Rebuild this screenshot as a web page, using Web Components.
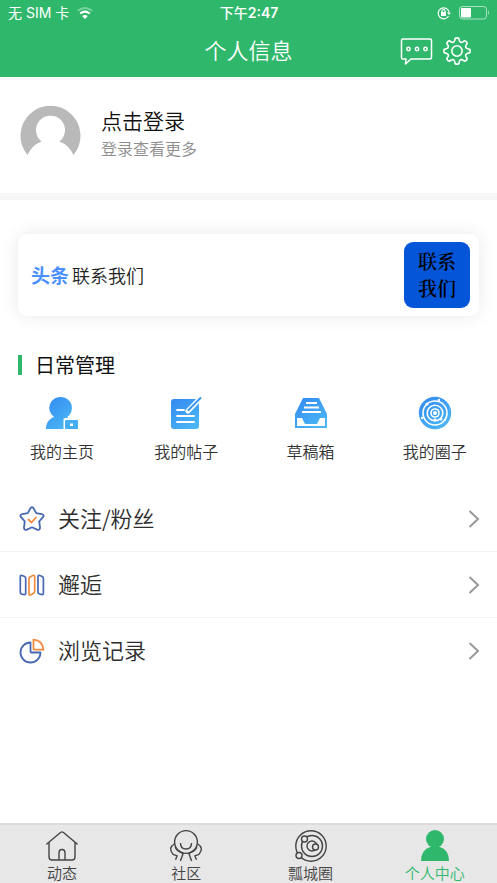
<!DOCTYPE html>
<html lang="zh-CN">
<head>
<meta charset="utf-8">
<meta name="viewport" content="width=device-width, initial-scale=1">
<title>个人信息</title>
<style>
  body { margin: 0; background: #fff; color: #2d2d2d; font-family: "Noto Sans CJK SC", sans-serif; }
</style>
</head>
<body>
<profile-page>
  <status-bar slot="top" carrier="无 SIM 卡" time="2:47" period="下午"></status-bar>
  <nav-bar slot="top">个人信息</nav-bar>

  <user-summary>点击登录<span slot="hint">登录查看更多</span></user-summary>
  <promo-card tag="头条">联系我们<span slot="badge">联系<br>我们</span></promo-card>

  <section-panel>
    <span slot="title">日常管理</span>
    <shortcut-item>
      <svg slot="icon" width="34" height="34" viewBox="0 0 34 34">
        <defs><linearGradient id="blue" x1="0" y1="0" x2="0.7" y2="1"><stop offset="0" stop-color="#3288f0"/><stop offset="1" stop-color="#4ab6f5"/></linearGradient></defs>
        <path fill="url(#blue)" d="M16 1a11 11 0 0 1 6 20.200l1.500.8H20a1.500 1.500 0 0 0-1.500 1.500V33H1c0-6 3-10 8-12A11 11 0 0 1 16 1z"/>
        <path fill="#46aff4" fill-rule="evenodd" d="M21 24h11q1 0 1 1v8H21q-1 0-1-1v-7q0-1 1-1zm4 3.500v2.500h3v-2.500z"/>
      </svg>我的主页</shortcut-item>
    <shortcut-item>
      <svg slot="icon" width="34" height="34" viewBox="0 0 34 34">
        <rect x="2" y="3" width="28" height="30" rx="3" fill="url(#blue)"/>
        <path d="M8 14h7M8 20h17M8 26h17" stroke="#fff" stroke-width="1.800" stroke-linecap="round"/>
        <path d="M32 1.500 19 15" stroke="#fff" stroke-width="5" stroke-linecap="round"/>
        <path d="M31.500 2 19.500 14" stroke="#3996f2" stroke-width="2" stroke-linecap="round"/>
      </svg>我的帖子</shortcut-item>
    <shortcut-item>
      <svg slot="icon" width="34" height="34" viewBox="0 0 34 34">
        <path fill="url(#blue)" fill-rule="evenodd" d="M9 2h16l8 16v14H1V18zM3 22v8h28v-8h-5l-3 6H11l-3-6z"/>
        <path d="M12 7h11M10 11.500h15M8 16h19" stroke="#fff" stroke-width="2"/>
      </svg>草稿箱</shortcut-item>
    <shortcut-item>
      <svg slot="icon" width="34" height="34" viewBox="0 0 34 34">
        <circle cx="17" cy="17" r="16.200" fill="url(#blue)"/>
        <g fill="none" stroke="#fff" stroke-width="1.600"><circle cx="17" cy="17" r="12"/><circle cx="17" cy="17" r="7.800"/><circle cx="17" cy="17" r="4"/></g>
        <g fill="#fff"><circle cx="17" cy="17" r="2"/><circle cx="21" cy="4" r="1.200"/><circle cx="9" cy="8" r="1.600"/><circle cx="4" cy="22" r="1.200"/><circle cx="23" cy="23" r="1.500"/><circle cx="27" cy="24" r="1"/><circle cx="17" cy="24" r="1.400"/></g>
      </svg>我的圈子</shortcut-item>
  </section-panel>

  <menu-row>
    <svg slot="icon" width="26" height="26" viewBox="0 0 26 26" fill="none" stroke-width="1.800" stroke-linejoin="round" stroke-linecap="round">
      <path stroke="#4868b4" d="M11.200 2.600q1.800-2.700 3.600 0l2.400 4.600 5.500 1q3 .8 1.300 3l-3.800 4.200.8 6q0 3.200-2.800 2.200L13 21.300l-5.200 2.300q-2.800 1-2.800-2.200l.8-6L2 11.200q-1.700-2.200 1.300-3l5.500-1z"/>
      <path stroke="#f58a3c" d="m9.500 13.500 3 3 4.500-5"/>
    </svg>关注/粉丝</menu-row>
  <menu-row>
    <svg slot="icon" width="26" height="26" viewBox="0 0 26 26" fill="none" stroke-width="1.700" stroke-linejoin="round">
      <path stroke="#4868b4" d="M1.300 4.800q0-2 1.800-1.300l2.400 1q1.200.6 1.200 2v14.700q0 1.400-1.200 1.400L3 22.200q-1.700-.4-1.700-1.800zM19 4.800q0-2 1.800-1.300l2.400 1q1.200.6 1.200 2v14.700q0 1.400-1.200 1.400l-2.500-.6q-1.700-.4-1.700-1.800z"/>
      <path stroke="#f58a3c" d="M10 7q0-1.400 1-2l2.800-1.500q1.900-.8 1.900 1.200V19q0 1.500-1 2.200L12 22.800q-2 1-2-1z"/>
    </svg>邂逅</menu-row>
  <menu-row>
    <svg slot="icon" width="26" height="26" viewBox="0 0 26 26" fill="none" stroke-width="1.800" stroke-linejoin="round">
      <path stroke="#4868b4" d="M11.500 4.500a10 10 0 1 0 10 10h-9q-1 0-1-1z"/>
      <path stroke="#f58a3c" d="M14.500 1.600q9 .8 10 10h-9q-1 0-1-1z"/>
    </svg>浏览记录</menu-row>

  <tab-bar slot="bottom">
    <tab-item>
      <svg slot="icon" width="34" height="34" viewBox="0 0 34 34" fill="none" stroke="currentColor" stroke-width="1.400" stroke-linejoin="round" stroke-linecap="round"><path d="M1.800 15 15.500 3.500q1.500-1.200 3 0L32.200 15M4 13.500V28q0 3 3 3h20q3 0 3-3V13.500M14 31v-7q0-3.500 3-3.500t3 3.500v7"/></svg>动态</tab-item>
    <tab-item>
      <svg slot="icon" width="34" height="34" viewBox="0 0 34 34" fill="none" stroke="currentColor" stroke-width="1.400" stroke-linejoin="round"><circle cx="17" cy="13" r="11.400"/><path d="M11.500 14q0 6 5.500 6t5.500-6M5.800 14.500Q-1.500 19 4 25.300l4.200 1.500-1.700 4M6.200 17.500q.5 4.500 8 6.800L11.400 32M28.200 14.500q7.300 4.500 1.800 10.800l-4.200 1.500 1.700 4M27.800 17.500q-.5 4.500-8 6.800l2.800 7.700"/></svg>社区</tab-item>
    <tab-item>
      <svg slot="icon" width="34" height="34" viewBox="0 0 34 34" fill="none" stroke="currentColor" stroke-width="1.400"><circle cx="17" cy="17" r="15.200"/><circle cx="18" cy="17" r="10.500"/><circle cx="18" cy="17" r="5"/><g fill="#e7e7e7"><circle cx="21.500" cy="18" r="3"/><circle cx="10.500" cy="10" r="3"/><circle cx="5" cy="26.500" r="3"/></g></svg>瓢城圈</tab-item>
    <tab-item active>
      <svg slot="icon" width="34" height="34" viewBox="0 0 34 34" fill="currentColor"><circle cx="17" cy="10" r="9"/><path d="M3 32q0-11 9-14h10q9 3 9 14z"/></svg>个人中心</tab-item>
  </tab-bar>
</profile-page>

<script>
  const define = (name, html, setup) => {
    const template = document.createElement('template');
    template.innerHTML = html;
    customElements.define(name, class extends HTMLElement {
      constructor() {
        super();
        this.attachShadow({ mode: 'open' }).append(template.content.cloneNode(true));
      }
      connectedCallback() { if (setup) setup(this, this.shadowRoot); }
    });
  };

  define('profile-page', `
    <style>
      :host { display: flex; flex-direction: column; min-height: 100vh; }
      main { flex: 1; }
      footer { position: sticky; bottom: 0; }
    </style>
    <header><slot name="top"></slot></header>
    <main><slot></slot></main>
    <footer><slot name="bottom"></slot></footer>`);

  define('status-bar', `
    <style>
      :host { display: grid; grid-template-columns: 1fr auto 1fr; align-items: center; height: 26px; padding: 0 7px 0 8px; background: #2fb86b; color: #fff; font: 14px/20px Inter, "Noto Sans CJK SC", sans-serif; }
      div { display: flex; align-items: center; gap: 8px; }
      .end { justify-content: flex-end; }
      .time { gap: 0; font-weight: 600; }
      .period { font-weight: 500; }
    </style>
    <div><span class="carrier"></span>
      <svg width="16" height="12" viewBox="0 0 16 12" fill="none" stroke="#fff" stroke-width="2"><path opacity=".35" d="M.7 3.800q7.300-5.600 14.600 0"/><path d="M3.200 6.500q4.800-3.700 9.600 0"/><path fill="#fff" stroke="none" d="M5.200 9q2.800-2.200 5.600 0L8 12z"/></svg>
    </div>
    <div class="time"><span class="period"></span><span class="clock"></span></div>
    <div class="end">
      <svg width="14" height="14" viewBox="0 0 14 14" fill="none" stroke="#fff" stroke-width="1.200"><path d="M11.500 10a5.500 5.500 0 1 1 .5-4"/><path fill="#fff" stroke="none" d="M10 6.500h4L12 9zM4 6h5v4H4z"/><path d="M5 6V5q0-1.500 1.500-1.500T8 5v1"/></svg>
      <svg width="31" height="14" viewBox="0 0 31 14"><rect x=".5" y=".5" width="27" height="12.500" rx="3" fill="none" stroke="#fff" opacity=".6"/><rect x="2" y="2" width="10" height="9.500" rx="1" fill="#fff"/><path d="M29 4.500q2 2.200 0 4.500z" fill="#fff" opacity=".6"/></svg>
    </div>`, (el, root) => {
      root.querySelector('.carrier').textContent = el.getAttribute('carrier');
      root.querySelector('.period').textContent = el.getAttribute('period');
      root.querySelector('.clock').textContent = el.getAttribute('time');
    });

  define('nav-bar', `
    <style>
      :host { display: grid; grid-template-columns: 1fr auto 1fr; align-items: center; height: 51px; padding: 0 26px; background: #2fb86b; color: #fff; }
      h1 { grid-column: 2; margin: 0; padding-bottom: 6px; font-size: 22px; font-weight: 350; line-height: 32px; }
      div { display: flex; justify-content: flex-end; gap: 10px; padding-bottom: 2px; }
      button { display: flex; padding: 0; border: 0; background: none; color: inherit; }
    </style>
    <h1><slot></slot></h1>
    <div>
      <button aria-label="消息"><svg width="33" height="28" viewBox="0 0 33 28" fill="none" stroke="currentColor" stroke-width="1.500" stroke-linejoin="round"><path d="M3 2h27q1.500 0 1.500 1.500v17q0 1.500-1.500 1.500H11l-5.500 5 .5-5H3q-1.500 0-1.500-1.500v-17Q1.500 2 3 2z"/><g><circle cx="8.500" cy="12" r="1.700"/><circle cx="17" cy="12" r="1.700"/><circle cx="25.500" cy="12" r="1.700"/></g></svg></button>
      <button aria-label="设置"><svg class="gear" width="28" height="28" viewBox="0 0 28 28" fill="none" stroke="currentColor" stroke-width="1.600" stroke-linejoin="round"><path/><circle cx="14" cy="14" r="5.200"/></svg></button>
    </div>`, (el, root) => {
      // Eight rounded teeth around the hub.
      const at = (r, deg) => {
        const a = deg * Math.PI / 180;
        return (14 + r * Math.sin(a)).toFixed(2) + ' ' + (14 - r * Math.cos(a)).toFixed(2);
      };
      let d = 'M' + at(12.8, -8);
      for (let t = 0; t < 360; t += 45) {
        d += 'Q' + at(13.6, t) + ' ' + at(12.8, t + 8) + 'L' + at(10.6, t + 13)
           + 'Q' + at(8.6, t + 22.5) + ' ' + at(10.6, t + 32) + 'L' + at(12.8, t + 37);
      }
      root.querySelector('.gear path').setAttribute('d', d + 'Z');
    });

  define('user-summary', `
    <style>
      :host { display: block; border-bottom: 7px solid #f6f6f6; }
      a { display: flex; align-items: center; gap: 20px; height: 116px; padding: 0 20px; color: #111; text-decoration: none; }
      .text { display: grid; padding-bottom: 4px; }
      .name { font-size: 21px; line-height: 30px; font-weight: 350; }
      .hint { font-size: 16px; line-height: 26px; font-weight: 350; color: #8e8e8e; }
    </style>
    <a href="#login">
      <svg width="61" height="61" viewBox="0 0 61 61"><path fill="#b9b9b9" d="M7.500 50A30 30 0 1 1 53.500 50Q49 40 39.500 36.500A14.500 14.500 0 1 0 21.500 36.500Q12 40 7.500 50z"/></svg>
      <span class="text"><span class="name"><slot></slot></span><span class="hint"><slot name="hint"></slot></span></span>
    </a>`);

  define('promo-card', `
    <style>
      :host { display: block; padding: 34px 18px 0; }
      a { display: flex; align-items: center; height: 82px; padding: 0 9px 0 13px; box-sizing: border-box; border-radius: 9px; background: #fff; box-shadow: 0 0 18px rgba(0,0,0,.09); color: #222; text-decoration: none; font-size: 18px; line-height: 26px; font-weight: 350; }
      b { color: #4a90ff; font-size: 19px; font-weight: 700; margin-right: 3px; }
      .badge { box-sizing: border-box; width: 66px; height: 66px; padding-top: 5px; margin-left: auto; border-radius: 9px; background: #0455d8; color: #000; text-align: center; font: 600 19px/27px "Noto Serif CJK SC", "Noto Sans CJK SC", serif; }
    </style>
    <a href="#contact"><span><b></b><slot></slot></span><span class="badge"><slot name="badge"></slot></span></a>`,
    (el, root) => { root.querySelector('b').textContent = el.getAttribute('tag'); });

  define('section-panel', `
    <style>
      :host { display: block; padding: 34px 0 23px; }
      h2 { display: flex; align-items: center; gap: 13px; margin: 0 18px; font-size: 20px; line-height: 30px; font-weight: 400; color: #111; }
      h2::before { content: ""; width: 4px; height: 20px; background: #2fb86b; }
      div { display: grid; grid-template-columns: repeat(4, 1fr); margin-top: 16px; }
    </style>
    <h2><slot name="title"></slot></h2><div><slot></slot></div>`);

  define('shortcut-item', `
    <style>
      :host { display: block; }
      a { display: flex; flex-direction: column; align-items: center; gap: 9px; color: #333; text-decoration: none; font-size: 16px; line-height: 24px; font-weight: 350; }
    </style>
    <a href="#shortcut"><slot name="icon"></slot><span><slot></slot></span></a>`);

  define('menu-row', `
    <style>
      :host { display: block; border-bottom: 1px solid #f4f4f4; }
      :host(:last-of-type) { border-bottom: 0; }
      a { display: flex; align-items: center; gap: 13px; height: 65px; padding: 0 17px 0 19px; color: #2d2d2d; text-decoration: none; font-size: 22px; line-height: 32px; font-weight: 350; }
      .label { padding-bottom: 4px; }
      .arrow { margin-left: auto; }
    </style>
    <a href="#row"><slot name="icon"></slot><span class="label"><slot></slot></span>
      <svg class="arrow" width="12" height="18" viewBox="0 0 12 18" fill="none" stroke="#999" stroke-width="2"><path d="m1.500 1 8.500 8-8.500 8"/></svg></a>`);

  define('tab-bar', `
    <style>
      :host { display: block; }
      nav { display: grid; grid-template-columns: repeat(4, 1fr); height: 60px; box-sizing: border-box; padding-top: 4px; border-top: 2px solid #dcdcdc; background: #e7e7e7; }
    </style>
    <nav><slot></slot></nav>`);

  define('tab-item', `
    <style>
      :host { display: block; color: #444; }
      :host([active]) { color: #2fb86b; }
      a { display: flex; flex-direction: column; align-items: center; color: inherit; text-decoration: none; font-size: 15px; line-height: 20px; font-weight: 350; }
    </style>
    <a href="#tab"><slot name="icon"></slot><span><slot></slot></span></a>`);
</script>
</body>
</html>
